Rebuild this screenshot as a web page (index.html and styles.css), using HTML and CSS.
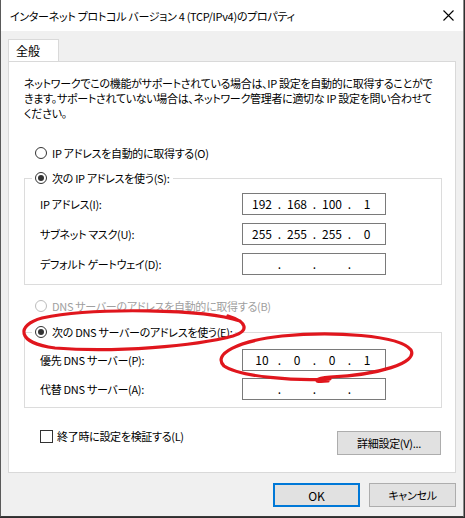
FILE: index.html
```html
<!DOCTYPE html>
<html lang="ja">
<head>
<meta charset="utf-8">
<title>インターネット プロトコル バージョン 4 (TCP/IPv4)のプロパティ</title>
<link rel="stylesheet" href="styles.css">
</head>
<body>
<div class="window">
  <div class="titlebar">
    <span class="title">インターネット プロトコル バージョン 4 (TCP/IPv4)のプロパティ</span>
    <svg class="close" width="11" height="11" viewBox="0 0 11 11"><path d="M0.5 0.5 L10.5 10.5 M10.5 0.5 L0.5 10.5" stroke="#000" stroke-width="1.1" fill="none"/></svg>
  </div>
  <div class="content">
    <div class="tabs"><div class="tab">全般</div></div>
    <div class="panel">
      <p class="desc">ネットワークでこの機能がサポートされている場合は、IP 設定を自動的に取得することがで<br>きます。サポートされていない場合は、ネットワーク管理者に適切な IP 設定を問い合わせて<br>ください。</p>

      <div class="radio-row first"><span class="radio"></span><span>IP アドレスを自動的に取得する(O)</span></div>

      <fieldset class="group group-ip">
        <legend><span class="radio checked"></span><span>次の IP アドレスを使う(S):</span></legend>
        <div class="fields">
          <span class="label">IP アドレス(I):</span>
          <div class="ipbox"><span class="seg">192</span><span class="dot">.</span><span class="seg">168</span><span class="dot">.</span><span class="seg">100</span><span class="dot">.</span><span class="seg">1</span></div>
          <span class="label">サブネット マスク(U):</span>
          <div class="ipbox"><span class="seg">255</span><span class="dot">.</span><span class="seg">255</span><span class="dot">.</span><span class="seg">255</span><span class="dot">.</span><span class="seg">0</span></div>
          <span class="label">デフォルト ゲートウェイ(D):</span>
          <div class="ipbox"><span class="seg"></span><span class="dot">.</span><span class="seg"></span><span class="dot">.</span><span class="seg"></span><span class="dot">.</span><span class="seg"></span></div>
        </div>
      </fieldset>

      <div class="radio-row disabled"><span class="radio"></span><span>DNS サーバーのアドレスを自動的に取得する(B)</span></div>

      <fieldset class="group group-dns">
        <legend><span class="radio checked"></span><span>次の DNS サーバーのアドレスを使う(E):</span></legend>
        <div class="fields dns">
          <span class="label">優先 DNS サーバー(P):</span>
          <div class="ipbox"><span class="seg">10</span><span class="dot">.</span><span class="seg">0</span><span class="dot">.</span><span class="seg">0</span><span class="dot">.</span><span class="seg">1</span></div>
          <span class="label">代替 DNS サーバー(A):</span>
          <div class="ipbox"><span class="seg"></span><span class="dot">.</span><span class="seg"></span><span class="dot">.</span><span class="seg"></span><span class="dot">.</span><span class="seg"></span></div>
        </div>
      </fieldset>

      <div class="bottom-row">
        <label class="check-row"><span class="checkbox"></span><span>終了時に設定を検証する(L)</span></label>
        <button class="btn advanced">詳細設定(V)...</button>
      </div>
    </div>
    <div class="dialog-buttons">
      <button class="btn ok">OK</button>
      <button class="btn">キャンセル</button>
    </div>
  </div>
  <svg class="annotation" width="464" height="518" viewBox="0 0 464 518">
    <path d="M240 321 C205 309 95 307 42 318 C16 325 16 343 55 348 C115 353 195 346 233 336 C249 331 248 322 228 316" stroke="#e0161d" stroke-width="3.2" fill="none" stroke-linecap="round"/>
    <path d="M330 379 C296 381 240 377 224 366 C212 354 238 341 282 336 C332 331 400 335 411 350 C418 363 378 375 330 377 C316 378 310 383 328 381" stroke="#e0161d" stroke-width="3.2" fill="none" stroke-linecap="round"/>
  </svg>
</div>
</body>
</html>
```
FILE: styles.css
```css
html, body {
  margin: 0;
  padding: 0;
}
body {
  background: #2f2f2f;
  font-family: "Noto Sans CJK JP", "Noto Sans", sans-serif;
  font-size: 11px;
  letter-spacing: -0.3px;
  font-feature-settings: "palt";
  color: #000;
  width: 465px;
  height: 518px;
  overflow: hidden;
}
.window {
  position: relative;
  width: 462px;
  height: 516px;
  background: #f0f0f0;
  border-left: 1px solid #5a5a5a;
  border-right: 1px solid #8a8a8a;
  border-bottom: 1px solid #3a3a3a;
}
.titlebar {
  height: 31px;
  background: #fff;
  display: flex;
  align-items: center;
  justify-content: space-between;
  padding: 0 9px 0 9px;
}
.title {
  line-height: 16px;
}
.close {
  display: block;
}
.content {
  padding: 8px 7px 0 7px;
}
.tabs {
  display: flex;
  height: 22px;
}
.tab {
  width: 51px;
  height: 22px;
  background: #fff;
  border: 1px solid #d9d9d9;
  border-bottom: none;
  line-height: 22px;
  padding-left: 7px;
  box-sizing: border-box;
  font-size: 12px;
  letter-spacing: 0;
  position: relative;
  z-index: 1;
}
.panel {
  background: #fff;
  border: 1px solid #d9d9d9;
  height: 412px;
  box-sizing: border-box;
  padding: 14px 12px 0 15px;
}
.desc {
  margin: 0;
  line-height: 15px;
  white-space: nowrap;
}
.radio-row {
  display: flex;
  align-items: center;
  height: 16px;
  margin-left: 11px;
  gap: 5px;
}
.radio-row.first {
  margin-top: 24px;
}
.radio-row.disabled {
  margin-top: 13px;
  color: #a0a0a0;
}
.radio {
  width: 12px;
  height: 12px;
  border-radius: 50%;
  border: 1px solid #333;
  box-sizing: border-box;
  background: #fff;
  display: flex;
  align-items: center;
  justify-content: center;
  flex: none;
}
.disabled .radio {
  border-color: #bcbcbc;
}
.radio.checked::after {
  content: "";
  width: 6px;
  height: 6px;
  border-radius: 50%;
  background: #333;
}
.group {
  margin: 0;
  padding: 0;
  border: 1px solid #dcdcdc;
  width: 418px;
  box-sizing: border-box;
  min-width: 0;
}
.group-ip {
  margin-top: 9px;
}
.group-dns {
  margin-top: 10px;
}
.group legend {
  display: flex;
  align-items: center;
  gap: 5px;
  height: 16px;
  padding: 0 3px;
  margin-left: 7px;
}
.fields {
  display: grid;
  grid-template-columns: 202px 144px;
  row-gap: 8px;
  align-items: center;
  padding: 7px 0 9px 15px;
}
.fields.dns {
  row-gap: 7px;
  padding: 9px 0 7px 15px;
}
.ipbox {
  height: 22px;
  border: 1px solid #7a7a7a;
  box-sizing: border-box;
  display: flex;
  align-items: center;
  padding-left: 6px;
  line-height: 16px;
  font-size: 12px;
  letter-spacing: 0;
}
.seg {
  width: 26px;
  text-align: center;
}
.dot {
  width: 9px;
  text-align: center;
}
.bottom-row {
  display: flex;
  justify-content: space-between;
  align-items: flex-start;
  margin-top: 21px;
  width: 417px;
}
.check-row {
  display: flex;
  align-items: center;
  gap: 4px;
  margin-left: 16px;
  height: 16px;
  margin-top: -1px;
}
.checkbox {
  width: 13px;
  height: 13px;
  border: 1px solid #333;
  box-sizing: border-box;
  background: #fff;
}
.btn {
  font-family: inherit;
  font-size: 11px;
  letter-spacing: -0.3px;
  font-feature-settings: "palt";
  color: #000;
  background: #e1e1e1;
  border: 1px solid #adadad;
  height: 24px;
  padding: 0;
  margin: 0;
}
.advanced {
  width: 104px;
  margin-top: 2px;
}
.dialog-buttons {
  display: flex;
  justify-content: flex-end;
  gap: 9px;
  margin-top: 10px;
}
.dialog-buttons .btn {
  width: 87px;
  height: 24px;
}
.btn.ok {
  border: 2px solid #0078d7;
  font-size: 12px;
  letter-spacing: 0;
}
.annotation {
  position: absolute;
  left: -1px;
  top: 0;
  pointer-events: none;
}
```
